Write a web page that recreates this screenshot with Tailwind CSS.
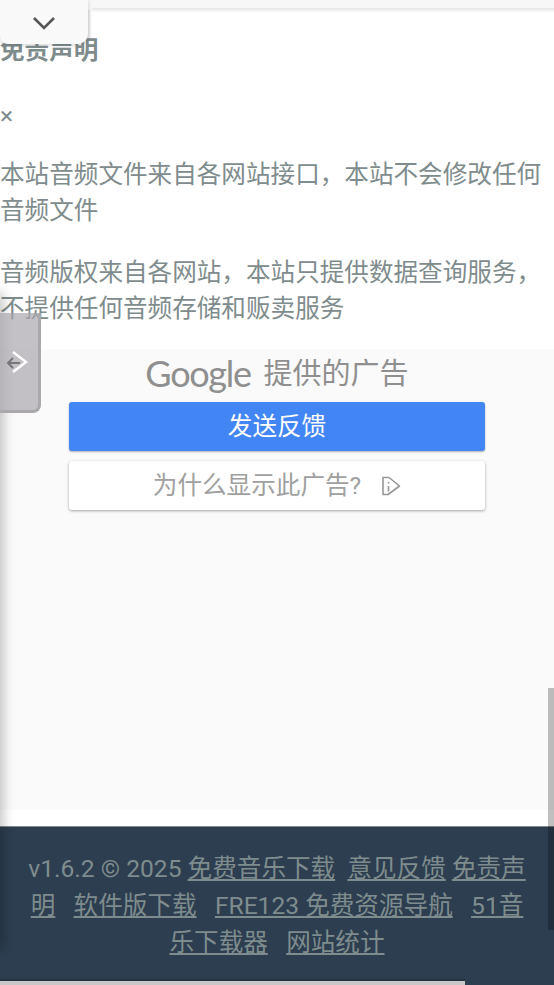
<!DOCTYPE html>
<html lang="zh-CN">
<head>
  <meta charset="UTF-8" />
  <meta name="viewport" content="width=device-width, initial-scale=1.0"/>
  <title>免责声明</title>
  <script src="https://cdn.jsdelivr.net/npm/@tailwindcss/browser@4"></script>
</head>
<body class="relative h-[985px] w-[554px] overflow-hidden bg-white font-['Roboto','Noto_Sans_CJK_SC',sans-serif] text-[24.6px] leading-[36px] text-[#7f8c8d]">

  <!-- top strip -->
  <div class="h-2 bg-[#f7f7f7]"></div>

  <!-- notice -->
  <div class="pt-[25px]">
    <h4 class="font-bold">免责声明</h4>
    <div class="mt-[29px]">×</div>
    <p class="mt-[23px]">本站音频文件来自各网站接口，本站不会修改任何音频文件</p>
    <p class="mt-[26px]">音频版权来自各网站，本站只提供数据查询服务，不提供任何音频存储和贩卖服务</p>
  </div>

  <!-- ad feedback -->
  <div class="mt-[22px] h-[461px] bg-[#fafafa] pt-[5px]">
    <div class="flex h-[40px] items-center justify-center text-[#8f8f8f]">
      <span class="mt-[-3px] font-['Lato',sans-serif] text-[36px] leading-none tracking-[-1.3px]">Google</span>
      <span class="ml-[13px] text-[29px]">提供的广告</span>
    </div>
    <div class="mx-[69px] mt-[8px] flex h-[49px] items-center justify-center rounded-[3px] bg-[#4285f4] text-white shadow-[0_1px_2px_rgba(0,0,0,0.3)]">发送反馈</div>
    <div class="mx-[69px] mt-[10px] flex h-[49px] items-center justify-center rounded-[3px] bg-white text-[#a0a0a0] shadow-[0_1px_3px_rgba(0,0,0,0.35)]">
      <span>为什么显示此广告?</span>
      <svg class="ml-[20px] h-[20px] w-[20px]" viewBox="0 0 20 20" fill="none" stroke="#969696" stroke-width="1.6">
        <path d="M8 1.5H2v17h5L18.5 10 8 1.5" stroke-linejoin="round"/>
        <path d="M7.5 10v5.5M7.5 6v1.6"/>
      </svg>
    </div>
  </div>

  <!-- footer -->
  <footer class="mt-4 border-t border-[#7f8c8d] bg-[#2c3e50] px-6 pt-[23px] pb-6 text-center leading-[37px]">
    v1.6.2 © 2025 <a class="underline">免费音乐下载</a>&nbsp; <a class="underline">意见反馈</a> <a class="underline">免责声明</a>&nbsp; &nbsp;<a class="underline">软件版下载</a>&nbsp; &nbsp;<a class="underline">FRE123 免费资源导航</a>&nbsp; &nbsp;<a class="underline">51音乐下载器</a>&nbsp; &nbsp;<a class="underline">网站统计</a>
  </footer>

  <!-- overlays -->
  <div class="absolute top-2 left-[87px] right-0 h-[5px] rounded-tl-[5px] bg-gradient-to-b from-[#e6e6e6] to-white"></div>
  <div class="absolute top-2 left-[87px] h-[30px] w-[5px] rounded-tl-[5px] bg-gradient-to-r from-[#dedede] to-white"></div>
  <div class="absolute top-0 left-0 flex h-[44px] w-[88px] items-start justify-center rounded-b-[8px] rounded-br-[10px] bg-[#f9f9f9] pt-[16px] shadow-[0_1px_4px_rgba(0,0,0,0.18)]">
    <svg class="h-[14px] w-[24px]" viewBox="0 0 24 14" fill="none" stroke="#555" stroke-width="2.6"><path d="M2 2l10 10L22 2"/></svg>
  </div>

  <div class="absolute top-[296px] left-[-6px] h-[650px] w-[6px] shadow-[0_0_12px_3px_rgba(0,0,0,0.25)]"></div>
  <div class="absolute top-[313px] left-0 h-[100px] w-[41px] rounded-br-lg border-r-[3px] border-b-[3px] border-[#aaa8ab] bg-[#aaa6ae]/70">
    <svg class="absolute top-[36px] left-0 h-[26px] w-[30px]" viewBox="0 0 30 26" fill="none" stroke-width="2.4">
      <path d="M20 14H8m5-5l-5 5 5 5" stroke="#77757b" stroke-width="2"/>
      <path d="M13 3l13 10-13 10" stroke="#fff"/>
    </svg>
  </div>

  <div class="absolute top-[688px] right-0 h-[242px] w-[6px] bg-black/25"></div>
  <div class="absolute bottom-0 left-0 w-[465px]">
    <div class="h-[2px] bg-[#253444]"></div>
    <div class="h-[4px] bg-[#c8c8c8]"></div>
  </div>
</body>
</html>
